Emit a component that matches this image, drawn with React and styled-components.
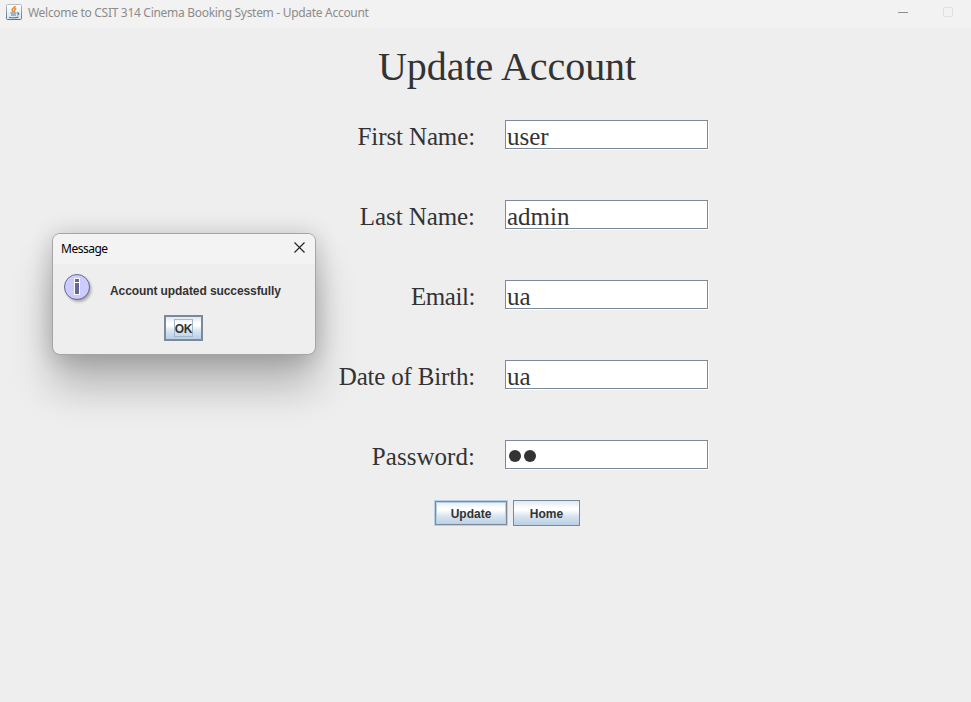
import React from "react";
import styled, { createGlobalStyle, css } from "styled-components";

const Global = createGlobalStyle`
  *, *::before, *::after { box-sizing: border-box; }
  body { margin: 0; background: #eeeeee; overflow: hidden; }
`;

const Frame = styled.div`
  position: relative;
  width: 971px;
  height: 702px;
  background: #eeeeee;
  color: #333333;
  overflow: hidden;
`;

const TitleBar = styled.header`
  display: flex;
  align-items: center;
  height: 28px;
  padding: 0 18px 4px 6px;
  background: #f2f2f2;
  font: 12px/16px "Noto Sans", sans-serif;
  color: #8c8c8c;
`;

const WindowTitle = styled.span`
  flex: 1;
  margin: 2px 0 0 6px;
  white-space: nowrap;
  letter-spacing: -0.3px;
`;

const Controls = styled.div`
  display: flex;
  align-items: center;
  gap: 35px;
`;

const Heading = styled.h1`
  width: 258px;
  margin: 16px 0 0 378px;
  font: 400 40px/46px "Liberation Serif", serif;
  letter-spacing: -0.05px;
  white-space: nowrap;
`;

const Form = styled.form`
  display: grid;
  grid-template-columns: 475px 204px;
  column-gap: 30px;
  grid-auto-rows: 30px;
  row-gap: 50px;
  margin-top: 30px;
`;

const serifText = css`
  font: 25px/28px "Liberation Serif", serif;
  white-space: nowrap;
`;

const Label = styled.label`
  ${serifText}
  padding-top: 3px;
  text-align: right;
  letter-spacing: ${(p) => p.$tracking}px;
`;

const Field = styled.div`
  ${serifText}
  width: 203px;
  height: 29px;
  padding: 2px 0 0 1px;
  background: #ffffff;
  border: 1px solid #7a8a99;
  box-shadow: 1px 1px 0 #ffffff;
`;

const Mask = styled.span`
  display: flex;
  gap: 3px;
  padding: 7px 0 0 2px;
`;

const Dot = styled.i`
  width: 12px;
  height: 12px;
  border-radius: 50%;
  background: #333333;
`;

const Actions = styled.div`
  display: flex;
  gap: 5px;
  margin: 30px 0 0 434px;
`;

const Button = styled.button`
  display: flex;
  align-items: center;
  justify-content: center;
  width: ${(p) => p.$width}px;
  height: 26px;
  padding: 1px 0 0;
  border: 1px solid #7a8a99;
  border-radius: 0;
  background: linear-gradient(#dfe8f2 0%, #ffffff 30%, #ffffff 38%, #dae5f0 62%, #b8cfe5 100%);
  font: bold 12px/14px "Liberation Sans", sans-serif;
  color: #333333;
  ${(p) => p.$kind === "hover" && css`
    border-color: #b8cfe5;
    box-shadow: inset 0 0 0 1px #7a8a99, inset 0 0 0 2px #b8cfe5;
  `}
  ${(p) => p.$kind === "default" && css`
    border-width: 2px;
  `}
`;

const FocusRing = styled.span`
  width: 19px;
  height: 18px;
  margin-top: -1px;
  border: 1px solid #a3b8cc;
  line-height: 18px;
  display: flex;
  justify-content: center;
  letter-spacing: -0.3px;
`;

const Dialog = styled.section`
  position: absolute;
  left: 52px;
  top: 233px;
  width: 264px;
  height: 122px;
  border: 1px solid #a5a5a5;
  border-radius: 8px;
  background: #eeeeee;
  box-shadow: 0 32px 40px rgba(0, 0, 0, 0.24), 0 2px 24px rgba(0, 0, 0, 0.2);
`;

const DialogBar = styled.div`
  display: flex;
  align-items: center;
  justify-content: space-between;
  height: 30px;
  padding: 0 10px 0 8px;
  border-radius: 7px 7px 0 0;
  background: #f3f3f3;
  font: 12px/16px "Noto Sans", sans-serif;
  color: #000000;
  letter-spacing: -0.5px;
`;

const CloseIcon = styled.svg`
  margin-top: -3px;
`;

const DialogBody = styled.div`
  display: flex;
  align-items: flex-start;
  height: 51px;
  padding: 9px 0 0 10px;
`;

const Message = styled.p`
  margin: 11px 0 0 15px;
  font: bold 12px/14px "Liberation Sans", sans-serif;
  letter-spacing: -0.09px;
  white-space: nowrap;
`;

const DialogActions = styled.div`
  display: flex;
  padding-left: 111px;
`;

const JavaIcon = () => (
  <svg width="16" height="16" viewBox="0 0 16 16" fill="none">
    <defs>
      <linearGradient id="tile" x1="0" y1="0" x2="0" y2="1">
        <stop stopColor="#b3bdc6" />
        <stop offset="1" stopColor="#537795" />
      </linearGradient>
      <linearGradient id="tileFill" x1="0" y1="0" x2="0" y2="1">
        <stop stopColor="#ffffff" />
        <stop offset="1" stopColor="#dce5eb" />
      </linearGradient>
    </defs>
    <rect x="0.5" y="0.5" width="15" height="15" rx="1" fill="url(#tileFill)" stroke="url(#tile)" />
    <path d="M9 2C9.3 4 5.4 4.3 6.1 6.2L7.3 8M10.3 4.2C7.3 5.3 9.8 6.2 8 7.8" stroke="#ed8b2d" strokeWidth="1.6" />
    <path d="M4.3 9h6M5 11h5M3 13.2c2.6 .6 7 .6 9.5-.1M10.8 9c3-.8 2.6 1.7.4 2.2" stroke="#527a9b" strokeWidth="1.1" />
  </svg>
);

const InfoIcon = () => (
  <svg width="32" height="32" viewBox="0 0 32 32">
    <defs>
      <filter id="soft" x="-30%" y="-30%" width="160%" height="160%">
        <feGaussianBlur stdDeviation="1.5" />
      </filter>
    </defs>
    <circle cx="15.8" cy="16.3" r="12.3" fill="#777777" opacity="0.65" filter="url(#soft)" />
    <circle cx="14" cy="14" r="12.5" fill="#ccccff" stroke="#666699" />
    <path d="M11 5h6v17h-6z" fill="#ffffff" />
    <path d="M12 6h4v3h-4zM12 10h4v11h-4z" fill="#666699" />
  </svg>
);

const fields = [
  { label: "First Name:", value: "user", tracking: -0.12 },
  { label: "Last Name:", value: "admin", tracking: -0.08 },
  { label: "Email:", value: "ua", tracking: -0.45 },
  { label: "Date of Birth:", value: "ua", tracking: -0.19 },
  { label: "Password:", value: null, tracking: 0.04 },
];

export default function App() {
  return (
    <>
      <Global />
      <Frame>
        <TitleBar>
          <JavaIcon />
          <WindowTitle>Welcome to CSIT 314 Cinema Booking System - Update Account</WindowTitle>
          <Controls>
            <svg width="10" height="10"><path d="M0 5.5h10" stroke="#8e8e8e" /></svg>
            <svg width="10" height="10"><rect x=".5" y=".5" width="9" height="9" rx="1" fill="none" stroke="#dedede" /></svg>
          </Controls>
        </TitleBar>
        <Heading>Update Account</Heading>
        <Form>
          {fields.map(({ label, value, tracking }) => (
            <React.Fragment key={label}>
              <Label $tracking={tracking}>{label}</Label>
              <Field>{value ?? <Mask><Dot /><Dot /></Mask>}</Field>
            </React.Fragment>
          ))}
        </Form>
        <Actions>
          <Button $width={74} $kind="hover">Update</Button>
          <Button $width={67}>Home</Button>
        </Actions>
        <Dialog>
          <DialogBar>
            Message
            <CloseIcon width="11" height="11">
              <path d="M.5.5l10 10M10.5.5l-10 10" stroke="#202020" strokeWidth="1.1" />
            </CloseIcon>
          </DialogBar>
          <DialogBody>
            <InfoIcon />
            <Message>Account updated successfully</Message>
          </DialogBody>
          <DialogActions>
            <Button $width={39} $kind="default"><FocusRing>OK</FocusRing></Button>
          </DialogActions>
        </Dialog>
      </Frame>
    </>
  );
}
